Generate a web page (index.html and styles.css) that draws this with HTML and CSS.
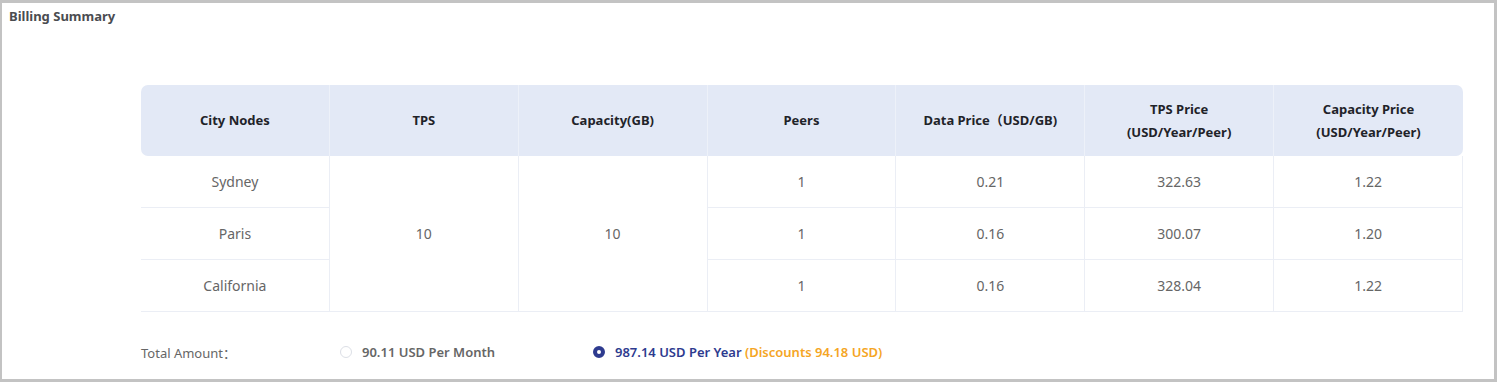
FILE: index.html
```html
<!DOCTYPE html>
<html>
<head>
<meta charset="utf-8">
<link rel="stylesheet" href="styles.css">
</head>
<body>
<div class="panel">
  <div class="title">Billing Summary</div>
  <div class="content">
    <table class="bill">
      <thead>
        <tr>
          <th>City Nodes</th>
          <th>TPS</th>
          <th>Capacity(GB)</th>
          <th>Peers</th>
          <th>Data Price（USD/GB)</th>
          <th>TPS Price<br>(USD/Year/Peer)</th>
          <th>Capacity Price<br>(USD/Year/Peer)</th>
        </tr>
      </thead>
      <tbody>
        <tr>
          <td>Sydney</td>
          <td rowspan="3">10</td>
          <td rowspan="3">10</td>
          <td>1</td>
          <td>0.21</td>
          <td>322.63</td>
          <td>1.22</td>
        </tr>
        <tr>
          <td>Paris</td>
          <td>1</td>
          <td>0.16</td>
          <td>300.07</td>
          <td>1.20</td>
        </tr>
        <tr>
          <td>California</td>
          <td>1</td>
          <td>0.16</td>
          <td>328.04</td>
          <td>1.22</td>
        </tr>
      </tbody>
    </table>
    <div class="total">
      <div class="total-label">Total Amount：</div>
      <label class="opt opt-month"><span class="radio"></span><span class="opt-text">90.11 USD Per Month</span></label>
      <label class="opt opt-year"><span class="radio checked"></span><span class="opt-text">987.14 USD Per Year <span class="discount">(Discounts 94.18 USD)</span></span></label>
    </div>
  </div>
</div>
</body>
</html>
```
FILE: styles.css
```css
html, body {
  margin: 0;
  padding: 0;
  background: #ffffff;
}
body {
  font-family: "Noto Sans", "Open Sans", "Noto Sans CJK SC", sans-serif;
  color: #606266;
}
.panel {
  box-sizing: border-box;
  width: 1497px;
  height: 382px;
  border-style: solid;
  border-color: #c3c3c3;
  border-width: 3px 3px 3px 2px;
  background: #fff;
  overflow: hidden;
}
.title {
  padding: 4px 0 0 7px;
  height: 19px;
  line-height: 19px;
  font-size: 13px;
  font-weight: 700;
  color: #4a4c50;
}
.content {
  padding: 59px 0 0 139px;
}
.bill {
  width: 1322px;
  border-collapse: separate;
  border-spacing: 0;
  table-layout: fixed;
}
.bill th {
  background: #e3e9f6;
  height: 71px;
  padding: 0;
  font-size: 13px;
  font-weight: 700;
  line-height: 23px;
  color: #1f2329;
  border-right: 1px solid #edf1f9;
  text-align: center;
}
.bill th:first-child {
  border-radius: 7px 0 0 7px;
}
.bill th:last-child {
  border-radius: 0 7px 7px 0;
  border-right: none;
}
.bill td {
  height: 51px;
  padding: 0;
  text-align: center;
  font-size: 14px;
  color: #666;
  border-bottom: 1px solid #ebeef5;
  border-right: 1px solid #ebeef5;
}
.total {
  display: flex;
  align-items: center;
  height: 80px;
  font-size: 13px;
}
.total-label {
  width: 199px;
  color: #666;
}
.opt {
  display: flex;
  align-items: center;
}
.opt-month {
  width: 253px;
}
.radio {
  box-sizing: border-box;
  width: 12px;
  height: 12px;
  border-radius: 50%;
  border: 1px solid #dcdfe6;
  margin-right: 10px;
  background: #fff;
}
.radio.checked {
  border: 4px solid #2e3b8f;
  background: #fff;
}
.opt-month .opt-text {
  color: #666;
  font-weight: 600;
}
.opt-year .opt-text {
  color: #2e3b8f;
  font-weight: 600;
}
.discount {
  color: #f5a524;
}
```
